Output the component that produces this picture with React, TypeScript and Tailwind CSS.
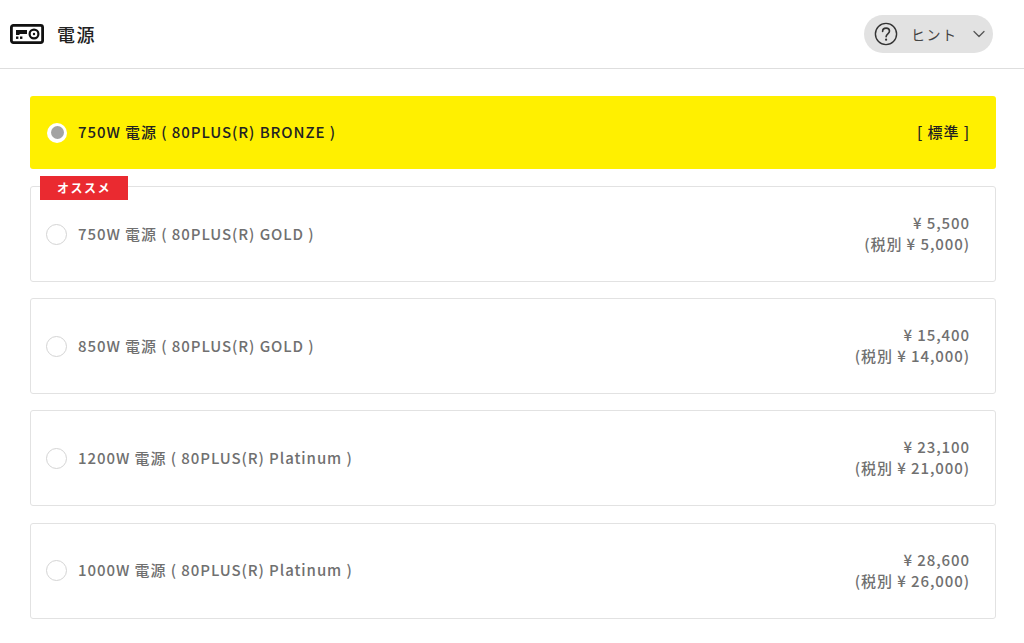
import React from "react";
import { ChevronDown } from "lucide-react";

const FONT = { fontFamily: '"Noto Sans CJK JP", "Noto Sans", sans-serif' };

const OPTIONS = [
  { label: "750W 電源 ( 80PLUS(R) GOLD )", price: "¥ 5,500", net: "(税別 ¥ 5,000)", badge: true },
  { label: "850W 電源 ( 80PLUS(R) GOLD )", price: "¥ 15,400", net: "(税別 ¥ 14,000)" },
  { label: "1200W 電源 ( 80PLUS(R) Platinum )", price: "¥ 23,100", net: "(税別 ¥ 21,000)" },
  { label: "1000W 電源 ( 80PLUS(R) Platinum )", price: "¥ 28,600", net: "(税別 ¥ 26,000)" },
];

function PowerIcon() {
  return (
    <svg width="34" height="20" viewBox="0 0 34 20" fill="none">
      <rect x="1.4" y="1.4" width="31.2" height="17.2" rx="2" stroke="#111" strokeWidth="2.8" />
      <path d="M6 6h11v4h-7.500v1h-3.500z" fill="#111" />
      <rect x="6" y="12.500" width="2.400" height="2.400" fill="#111" />
      <rect x="10" y="12.500" width="2.400" height="2.400" fill="#111" />
      <circle cx="24" cy="10" r="4.400" stroke="#111" strokeWidth="2.200" />
      <circle cx="24" cy="10" r="1.200" fill="#111" />
    </svg>
  );
}

function HintIcon() {
  return (
    <svg width="24" height="24" viewBox="0 0 24 24" fill="none">
      <circle cx="12" cy="12" r="10.600" stroke="#333" strokeWidth="1.400" />
      <path
        d="M8.600 9.400c0-2 1.500-3.300 3.500-3.300s3.400 1.200 3.400 3c0 2.700-3.400 2.700-3.400 5.600"
        stroke="#333"
        strokeWidth="1.600"
        strokeLinecap="round"
      />
      <circle cx="12.100" cy="17.700" r="1.100" fill="#333" />
    </svg>
  );
}

export default function App() {
  return (
    <div className="w-[1024px] h-[643px] overflow-hidden bg-white" style={FONT}>
      <header className="h-[69px] border-b border-[#dedede] flex items-center justify-between pl-[10px] pr-[31px]">
        <div className="flex items-center gap-[13px]">
          <PowerIcon />
          <span className="text-[18px] tracking-[1.500px] text-[#222] font-medium">電源</span>
        </div>
        <button className="h-[38px] w-[129px] rounded-full bg-[#e2e2e2] flex items-center pl-[10px] text-[#444]">
          <HintIcon />
          <span className="ml-[13px] text-[14px] tracking-[1.500px]">ヒント</span>
          <ChevronDown className="ml-[11px] text-[#555]" size={20} strokeWidth={1.500} />
        </button>
      </header>

      <main className="pl-[30px] pr-[28px] pt-[27px]">
        <div className="h-[73px] rounded-[3px] bg-[#fff000] flex items-center justify-between pl-[17px] pr-[26px] text-[15px] font-medium tracking-[0.930px] text-[#222]">
          <div className="flex items-center gap-[11px]">
            <span className="w-[20px] h-[20px] rounded-full bg-white flex items-center justify-center">
              <span className="w-[13px] h-[13px] rounded-full bg-[#a3a3a3]" />
            </span>
            <span>750W 電源 ( 80PLUS(R) BRONZE )</span>
          </div>
          <span>[ 標準 ]</span>
        </div>

        <div className="mt-[17px] flex flex-col gap-[16.200px]">
          {OPTIONS.map((option) => (
            <div
              key={option.label}
              className="relative h-[96px] rounded-[3px] border border-[#e2e2e2] bg-white flex items-center justify-between pl-[16px] pr-[25px] text-[15px] font-medium tracking-[0.930px] text-[#707070]"
            >
              {option.badge && (
                <span className="absolute left-[9px] top-[-11px] w-[88px] h-[24px] bg-[#ea2a30] text-white text-[12px] font-bold flex items-center justify-center tracking-[1.500px]">
                  オススメ
                </span>
              )}
              <div className="flex items-center gap-[11px] -translate-x-px">
                <span className="w-[21px] h-[21px] rounded-full border border-[#d4d4d4] bg-white" />
                <span>{option.label}</span>
              </div>
              <div className="text-right leading-[21px] -translate-y-px">
                <div>{option.price}</div>
                <div>{option.net}</div>
              </div>
            </div>
          ))}
        </div>
      </main>
    </div>
  );
}
